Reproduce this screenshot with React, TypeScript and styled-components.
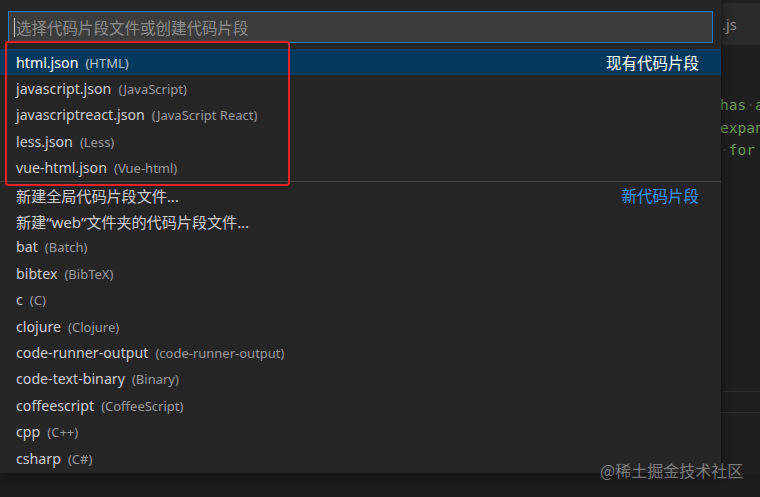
import React from "react";
import styled, { createGlobalStyle } from "styled-components";

const Global = createGlobalStyle`
  html, body { margin: 0; padding: 0; background: #1e1e1e; }
  body { font-family: "Segoe UI", "Noto Sans", "Noto Sans CJK SC", sans-serif; }
  * { box-sizing: border-box; }
`;

const Screen = styled.div`
  position: relative;
  width: 760px;
  height: 497px;
  overflow: hidden;
  background: #1b1b1b;
  display: grid;
  grid-template-rows: 474px 1fr;
`;

const Workbench = styled.div`
  display: grid;
  grid-template-columns: 721px 1fr;
  background: #1e1e1e;
`;

const Gutter = styled.div`
  background: #1e1e1e;
`;

const Editor = styled.div`
  display: grid;
  grid-template-rows: 3px 42px 1fr;
  background: #1e1e1e;
  overflow: hidden;
`;

const TopStrip = styled.div`
  background: #1f1f1f;
`;

const TabBar = styled.div`
  background: #2a2a2a;
  display: flex;
  align-items: center;
  padding-left: 1px;
`;

const TabLabel = styled.span`
  color: #8f8f8f;
  font-size: 14.5px;
`;

const CodeArea = styled.div`
  display: flex;
  flex-direction: column;
  padding-top: 49px;
  overflow: hidden;
`;

const CodeLine = styled.div`
  height: 22.5px;
  line-height: 22.5px;
  white-space: pre;
  overflow: hidden;
  font-family: "DejaVu Sans Mono", "Liberation Mono", monospace;
  font-size: 14.5px;
  color: #6a9955;
  margin-left: -1px;
`;

const Dot = styled.span`
  color: #4a4a4a;
`;

const PanelArea = styled.div`
  margin-top: auto;
  margin-bottom: 61px;
  height: 22px;
  border-top: 1px solid #2f2f2f;
  border-bottom: 1px solid #2f2f2f;
  background: #1e1e1e;
`;

const BottomStrip = styled.div`
  background: #1b1b1b;
`;

const QuickPick = styled.div`
  position: absolute;
  left: 0;
  top: 0;
  width: 721px;
  height: 473px;
  background: #252526;
  box-shadow: 0 0 8px rgba(0, 0, 0, 0.6);
  display: flex;
  flex-direction: column;
`;

const InputWrap = styled.div`
  padding: 11px 8px 6px 8px;
  background: #252526;
`;

const InputBox = styled.div`
  height: 32px;
  background: #3c3c3c;
  border: 1px solid #1f7dc8;
  display: flex;
  align-items: center;
  padding-left: 5px;
`;

const Caret = styled.span`
  width: 1px;
  height: 19px;
  background: #cfcfcf;
  margin-right: 1px;
`;

const Placeholder = styled.span`
  color: #8c8c8c;
  font-size: 15.5px;
  font-family: "Noto Sans CJK SC", sans-serif;
`;

const List = styled.div`
  display: flex;
  flex-direction: column;
`;

const Row = styled.div<{ $selected?: boolean; $separator?: boolean }>`
  height: 26.4px;
  display: flex;
  align-items: center;
  padding: 0 22px 0 16px;
  background: ${(p) => (p.$selected ? "#04395e" : "transparent")};
  border-top: ${(p) => (p.$separator ? "1px solid #474747" : "none")};
  white-space: nowrap;
`;

const Label = styled.span<{ $selected?: boolean; $cjk?: boolean }>`
  color: ${(p) => (p.$selected ? "#ffffff" : "#cccccc")};
  font-size: ${(p) => (p.$cjk ? "15.2px" : "14.2px")};
  font-family: "Segoe UI", "Noto Sans", "Noto Sans CJK SC", sans-serif;
  letter-spacing: ${(p) => (p.$cjk ? "-0.1px" : "0")};
`;

const Desc = styled.span<{ $selected?: boolean }>`
  color: ${(p) => (p.$selected ? "#b9c4cc" : "#9a9a9a")};
  font-size: 13px;
  margin-left: 7px;
  margin-top: 1px;
`;

const Group = styled.span<{ $link?: boolean }>`
  margin-left: auto;
  color: ${(p) => (p.$link ? "#3794ff" : "#ffffff")};
  font-size: 15.5px;
  font-family: "Noto Sans CJK SC", sans-serif;
`;

const Highlight = styled.div`
  position: absolute;
  left: 5px;
  top: 41px;
  width: 285px;
  height: 145px;
  border: 2.5px solid #e52222;
  border-radius: 3px;
  pointer-events: none;
`;

const Watermark = styled.div`
  position: absolute;
  left: 600px;
  top: 458px;
  font-family: "Noto Sans CJK SC", sans-serif;
  font-size: 16px;
  color: rgba(200, 200, 200, 0.55);
`;

type Item = {
  label: string;
  desc?: string;
  group?: string;
  link?: boolean;
  selected?: boolean;
  separator?: boolean;
  cjk?: boolean;
};

const items: Item[] = [
  { label: "html.json", desc: "(HTML)", selected: true, group: "现有代码片段" },
  { label: "javascript.json", desc: "(JavaScript)" },
  { label: "javascriptreact.json", desc: "(JavaScript React)" },
  { label: "less.json", desc: "(Less)" },
  { label: "vue-html.json", desc: "(Vue-html)" },
  { label: "新建全局代码片段文件...", separator: true, group: "新代码片段", link: true, cjk: true },
  { label: "新建“web”文件夹的代码片段文件...", cjk: true },
  { label: "bat", desc: "(Batch)" },
  { label: "bibtex", desc: "(BibTeX)" },
  { label: "c", desc: "(C)" },
  { label: "clojure", desc: "(Clojure)" },
  { label: "code-runner-output", desc: "(code-runner-output)" },
  { label: "code-text-binary", desc: "(Binary)" },
  { label: "coffeescript", desc: "(CoffeeScript)" },
  { label: "cpp", desc: "(C++)" },
  { label: "csharp", desc: "(C#)" },
];

export default function App() {
  return (
    <>
      <Global />
      <Screen>
        <Workbench>
          <Gutter />
          <Editor>
            <TopStrip />
            <TabBar>
              <TabLabel>.js</TabLabel>
            </TabBar>
            <CodeArea>
              <CodeLine>
                has<Dot>·</Dot>a
              </CodeLine>
              <CodeLine>expan</CodeLine>
              <CodeLine>
                <Dot>·</Dot>for
              </CodeLine>
              <PanelArea />
            </CodeArea>
          </Editor>
        </Workbench>
        <BottomStrip />

        <QuickPick>
          <InputWrap>
            <InputBox>
              <Caret />
              <Placeholder>选择代码片段文件或创建代码片段</Placeholder>
            </InputBox>
          </InputWrap>
          <List>
            {items.map((it) => (
              <Row key={it.label} $selected={it.selected} $separator={it.separator}>
                <Label $selected={it.selected} $cjk={it.cjk}>
                  {it.label}
                </Label>
                {it.desc && <Desc $selected={it.selected}>{it.desc}</Desc>}
                {it.group && <Group $link={it.link}>{it.group}</Group>}
              </Row>
            ))}
          </List>
        </QuickPick>
        <Highlight />
        <Watermark>@稀土掘金技术社区</Watermark>
      </Screen>
    </>
  );
}
